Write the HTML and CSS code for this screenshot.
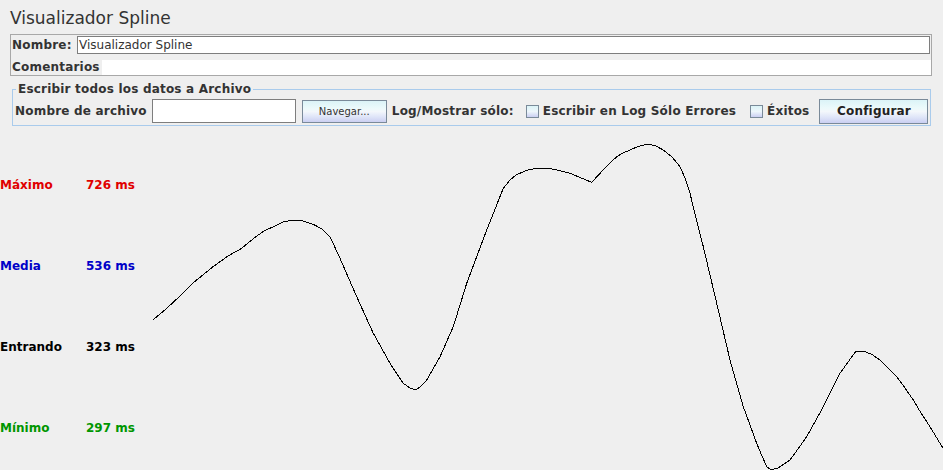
FILE: index.html
```html
<!DOCTYPE html>
<html lang="es">
<head>
<meta charset="utf-8">
<title>Visualizador Spline</title>
<link rel="stylesheet" href="styles.css">
</head>
<body>
<div class="page">
  <div class="top">
    <h1 class="title">Visualizador Spline</h1>
    <div class="namebox">
      <div class="row name-row">
        <span class="lbl name-lbl">Nombre:</span>
        <div class="field name-field">Visualizador Spline</div>
      </div>
      <div class="row comm-row">
        <span class="lbl comm-lbl">Comentarios</span>
        <div class="area"></div>
      </div>
    </div>
    <fieldset class="filebox">
      <legend class="lbl">Escribir todos los datos a Archivo</legend>
      <div class="filerow">
        <span class="lbl">Nombre de archivo</span>
        <div class="field file-field"></div>
        <button class="btn nav-btn" type="button">Navegar...</button>
        <span class="lbl log-lbl">Log/Mostrar sólo:</span>
        <span class="check check1"></span>
        <span class="lbl chk-lbl">Escribir en Log Sólo Errores</span>
        <span class="check check2"></span>
        <span class="lbl chk-lbl">Éxitos</span>
        <button class="btn cfg-btn" type="button">Configurar</button>
      </div>
    </fieldset>
  </div>
  <div class="chart">
    <div class="legend">
      <div class="leg-item max"><span class="leg-name">Máximo</span><span class="leg-val">726 ms</span></div>
      <div class="leg-item avg"><span class="leg-name">Media</span><span class="leg-val">536 ms</span></div>
      <div class="leg-item cur"><span class="leg-name">Entrando</span><span class="leg-val">323 ms</span></div>
      <div class="leg-item min"><span class="leg-name">Mínimo</span><span class="leg-val">297 ms</span></div>
    </div>
    <svg class="spline" width="790" height="344" viewBox="153 126 790 344" xmlns="http://www.w3.org/2000/svg">
      <polyline fill="none" stroke="#000" stroke-width="1" shape-rendering="crispEdges"
        points="153,320 166.7,308.3 183.3,293 193,283 213,266.7 228,256 241.7,248.3
        255,237.3 264,231 273.3,226.7 283,222 293.3,220 303,221 313.3,224.3 322,229 330,236.7
        340,258.3 356.7,296.7 373.3,333.3 390,363.3 397,374 403.3,383.3 410,388 416,390
        421,386 426.7,380 433,369 440,356.7 453.3,326.7 466.7,283.3 486.7,230 503.3,188.3
        510,180 516,175 523.3,171.7 530,169.3 540,168.3 546.7,168.3 555,169.5 570,173.3 591.7,182.3
        605,168 616.7,156.7 623,153 630,150 638,146.5 646.7,144.3 655,145.5 663.3,150 672,157 680,166.7
        685,178 690,193.3 696,218 703.3,246.7 716.7,303.3 730,360 743.3,406.7 756.7,443.3 762,456 766.7,466.7 770,469 773.3,469.3 778,468 784,464 790,460
        798,449 806.7,436.7 823.3,406.7 840,373.3 856,351 863.3,351 872,354.5 880,360 888,368 896.7,376.7 905,388 913.3,400 921,413 930,426.7 943,448.3"/>
    </svg>
  </div>
</div>
</body>
</html>
```

FILE: styles.css
```css
html, body {
  margin: 0;
  padding: 0;
  background: #efefef;
  overflow: hidden;
}

.page {
  width: 943px;
  height: 470px;
  font-family: "DejaVu Sans", "Liberation Sans", sans-serif;
  color: #333333;
  display: flex;
  flex-direction: column;
  overflow: hidden;
}

.top {
  height: 126px;
  flex: none;
}

.title {
  margin: 8px 0 6px 10px;
  font-size: 17px;
  font-weight: normal;
  line-height: 20px;
  color: #333333;
}

.lbl {
  font-size: 12px;
  font-weight: bold;
  letter-spacing: 0.2px;
  line-height: 15px;
  white-space: nowrap;
}

/* Name / comments box */
.namebox {
  margin: 0 11px 0 10px;
  border: 1px solid #a8a8a8;
  height: 42px;
  box-sizing: border-box;
}

.row {
  display: flex;
  height: 20px;
}

.name-row {
  align-items: center;
}

.name-lbl {
  width: 66px;
  padding-left: 1px;
  box-sizing: border-box;
}

.field {
  background: #ffffff;
  border: 1px solid #7e7e7e;
  box-sizing: border-box;
  font-size: 12px;
  line-height: 16px;
  color: #333333;
}

.name-field {
  flex: 1;
  height: 18px;
  margin-right: 1px;
  padding-left: 1px;
}

.comm-row {
  align-items: flex-end;
}

.comm-lbl {
  width: 91px;
  padding-left: 1px;
  box-sizing: border-box;
}

.area {
  flex: 1;
  height: 15px;
  background: #ffffff;
}

/* File box */
.filebox {
  margin: 6px 12px 0 12px;
  padding: 0 0 0 2px;
  border: 1px solid #a9cbec;
  min-width: 0;
}

.filebox legend {
  margin-left: 1px;
  padding: 0 2px;
  color: #333333;
}

.filerow {
  display: flex;
  align-items: center;
  height: 28px;
}

.file-field {
  width: 144px;
  height: 24px;
  margin-left: 5px;
}

.btn {
  font-family: "DejaVu Sans", "Liberation Sans", sans-serif;
  border: 1px solid #7a8a99;
  padding: 0;
  color: #333333;
  background: linear-gradient(to bottom, #dbf3f7 0%, #ecfafb 35%, #f3f7fb 50%, #dfe5f8 75%, #cbcff2 100%);
}

.nav-btn {
  width: 85px;
  height: 23px;
  margin-left: 6px;
  font-size: 10px;
}

.log-lbl {
  width: 129px;
  margin-left: 5px;
}

.check {
  width: 13px;
  height: 13px;
  box-sizing: border-box;
  border: 1px solid #7a8a99;
  background: linear-gradient(to bottom, #dbf3f7 0%, #eef6fb 50%, #cbcff2 100%);
  flex: none;
}

.check1 {
  margin-left: 5px;
}

.check2 {
  margin-left: 14px;
}

.chk-lbl {
  margin-left: 4px;
}

.cfg-btn {
  width: 109px;
  height: 25px;
  margin-left: 10px;
  font-size: 12px;
  font-weight: bold;
  letter-spacing: 0.2px;
  color: #222222;
}

/* Chart */
.chart {
  flex: 1;
  display: flex;
  overflow: hidden;
}

.legend {
  width: 153px;
  flex: none;
  padding-top: 52.4px;
  box-sizing: border-box;
}

.leg-item {
  display: grid;
  grid-template-columns: 86px auto;
  height: 80.8px;
  font-size: 12px;
  font-weight: bold;
  line-height: 15px;
  white-space: nowrap;
}

.leg-item:last-child {
  height: 15px;
}

.max { color: #e00000; }
.avg { color: #0000c8; }
.cur { color: #000000; }
.min { color: #009600; }

.spline {
  display: block;
  flex: none;
}
```
